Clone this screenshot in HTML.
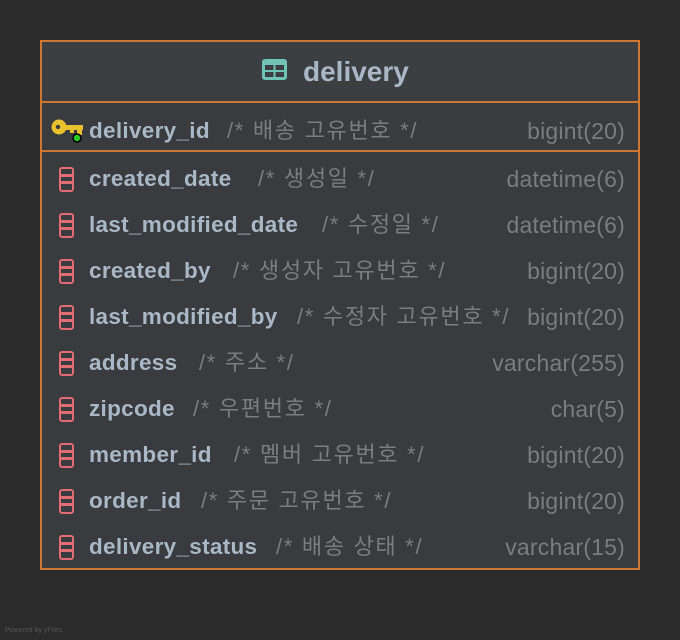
<html><head><style>
body{margin:0;width:680px;height:640px;background:#2b2b2b;position:relative;overflow:hidden;font-family:"Liberation Sans","Noto Sans CJK KR",sans-serif}
.box{position:absolute;left:40px;top:40px;width:596px;height:526px;border:2px solid #cc7832;background:#393b3e}
.hdr{position:absolute;left:0;top:0;width:596px;height:59px;background:#3c3f41;border-bottom:2px solid #cc7832}
.title{position:absolute;left:261px;top:14px;font-size:28px;font-weight:bold;color:#a9b7c6}
.div{position:absolute;left:0;top:108px;width:596px;height:2px;background:#cc7832}
.r{position:absolute;height:30px;font-size:22.5px;line-height:30px;white-space:nowrap;width:596px}
.n{position:absolute;left:47px;font-weight:bold;color:#a9b7c6;letter-spacing:0.3px}
.c{position:absolute;color:#7a7d80;font-size:22px;letter-spacing:1.7px}
.t{position:absolute;right:13px;color:#7a7d80;text-align:right;font-size:23px;letter-spacing:0.2px}
.ic{position:absolute;left:17px;top:3px;width:15px;height:25px;border:2.5px solid #e06c75;border-radius:3px;box-sizing:border-box}
.ic:before,.ic:after{content:"";position:absolute;left:0;right:0;height:2.5px;background:#e06c75}
.ic:before{top:5px}.ic:after{top:12px}
</style></head><body>
<div class="box">
<div class="hdr">
<svg style="position:absolute;left:220px;top:17px" width="25" height="21" viewBox="0 0 25 21"><rect x="0" y="0" width="25" height="21" rx="3" fill="#6fc3b7"/><rect x="3" y="6" width="8.5" height="5" fill="#3c3f41"/><rect x="13.5" y="6" width="8.5" height="5" fill="#3c3f41"/><rect x="3" y="13" width="8.5" height="5" fill="#3c3f41"/><rect x="13.5" y="13" width="8.5" height="5" fill="#3c3f41"/></svg>
<div class="title">delivery</div>
</div>
<div class="div"></div>
<div class="r" style="top:74px">
<svg style="position:absolute;left:9px;top:2px" width="34" height="28" viewBox="0 0 34 28"><circle cx="8" cy="9" r="7.5" fill="#e8c22e"/><circle cx="7" cy="9" r="2.2" fill="#393b3e"/><rect x="13" y="7" width="19" height="5" fill="#e8c22e"/><rect x="26" y="10" width="5" height="7" fill="#e8c22e"/><rect x="19" y="10" width="4" height="5" fill="#e8c22e"/><circle cx="26" cy="20" r="4" fill="#22cc22" stroke="#000" stroke-width="1.5"/></svg>
<span class="n">delivery_id</span><span class="c" style="left:185px">/* 배송 고유번호 */</span><span class="t">bigint(20)</span></div>
<div class="r" style="top:122px"><div class="ic"></div><span class="n">created_date</span><span class="c" style="left:216px">/* 생성일 */</span><span class="t">datetime(6)</span></div>
<div class="r" style="top:168px"><div class="ic"></div><span class="n">last_modified_date</span><span class="c" style="left:280px">/* 수정일 */</span><span class="t">datetime(6)</span></div>
<div class="r" style="top:214px"><div class="ic"></div><span class="n">created_by</span><span class="c" style="left:191px">/* 생성자 고유번호 */</span><span class="t">bigint(20)</span></div>
<div class="r" style="top:260px"><div class="ic"></div><span class="n">last_modified_by</span><span class="c" style="left:255px">/* 수정자 고유번호 */</span><span class="t">bigint(20)</span></div>
<div class="r" style="top:306px"><div class="ic"></div><span class="n">address</span><span class="c" style="left:157px">/* 주소 */</span><span class="t">varchar(255)</span></div>
<div class="r" style="top:352px"><div class="ic"></div><span class="n">zipcode</span><span class="c" style="left:151px">/* 우편번호 */</span><span class="t">char(5)</span></div>
<div class="r" style="top:398px"><div class="ic"></div><span class="n">member_id</span><span class="c" style="left:192px">/* 멤버 고유번호 */</span><span class="t">bigint(20)</span></div>
<div class="r" style="top:444px"><div class="ic"></div><span class="n">order_id</span><span class="c" style="left:159px">/* 주문 고유번호 */</span><span class="t">bigint(20)</span></div>
<div class="r" style="top:490px"><div class="ic"></div><span class="n">delivery_status</span><span class="c" style="left:234px">/* 배송 상태 */</span><span class="t">varchar(15)</span></div>
</div>
<div style="position:absolute;left:5px;top:627px;font-size:7px;color:#555">Powered by yFiles</div>
</body></html>
